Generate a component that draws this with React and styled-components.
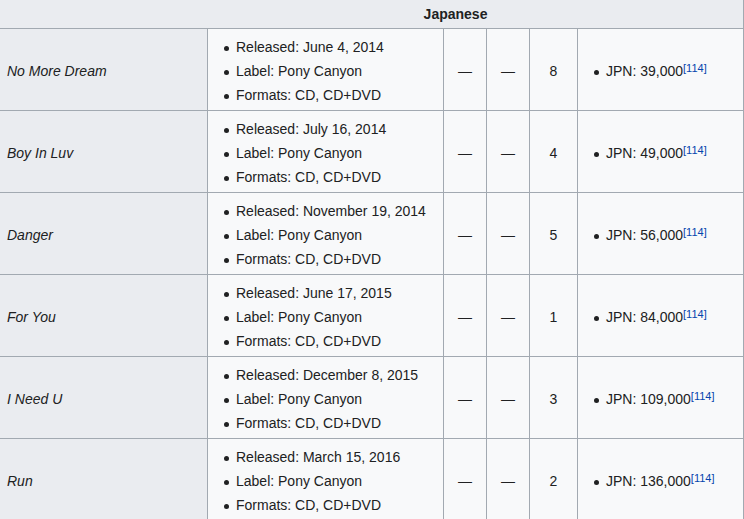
import styled, { createGlobalStyle } from "styled-components";

const releases = [
  { title: "No More Dream", date: "June 4, 2014", peak: "8", sales: "39,000" },
  { title: "Boy In Luv", date: "July 16, 2014", peak: "4", sales: "49,000" },
  { title: "Danger", date: "November 19, 2014", peak: "5", sales: "56,000" },
  { title: "For You", date: "June 17, 2015", peak: "1", sales: "84,000" },
  { title: "I Need U", date: "December 8, 2015", peak: "3", sales: "109,000" },
  { title: "Run", date: "March 15, 2016", peak: "2", sales: "136,000" },
];

export default function App() {
  return (
    <>
      <GlobalStyle />
      <Viewport>
        <Table>
          <colgroup>
            <col style={{ width: 208 }} />
            <col style={{ width: 236 }} />
            <col style={{ width: 43 }} />
            <col style={{ width: 43 }} />
            <col style={{ width: 48 }} />
            <col style={{ width: 166 }} />
          </colgroup>
          <thead>
            <tr>
              <HeaderCell colSpan={6}>Japanese</HeaderCell>
            </tr>
          </thead>
          <tbody>
            {releases.map((r) => (
              <tr key={r.title}>
                <TitleCell>{r.title}</TitleCell>
                <Cell>
                  <List>
                    <Item>Released: {r.date}</Item>
                    <Item>Label: Pony Canyon</Item>
                    <Item>Formats: CD, CD+DVD</Item>
                  </List>
                </Cell>
                <Cell $center>—</Cell>
                <Cell $center>—</Cell>
                <Cell $center>{r.peak}</Cell>
                <Cell>
                  <List>
                    <Item>
                      JPN: {r.sales}
                      <Ref>[114]</Ref>
                    </Item>
                  </List>
                </Cell>
              </tr>
            ))}
          </tbody>
        </Table>
      </Viewport>
    </>
  );
}

const GlobalStyle = createGlobalStyle`
  body {
    margin: 0;
    background: #ffffff;
    font-family: "Liberation Sans", Arial, sans-serif;
    font-size: 14px;
    color: #202122;
  }
`;

const Viewport = styled.div`
  width: 744px;
  height: 519px;
  overflow: hidden;
`;

const Table = styled.table`
  border-collapse: collapse;
  table-layout: fixed;
  width: 745px;
  margin: -1px 0 0 -1px;
  background: #f8f9fa;
  color: #202122;

  td,
  th {
    border: 1px solid #a2a9b1;
  }
`;

const HeaderCell = styled.th`
  background: #eaecf0;
  height: 29px;
  padding: 0 0 0 168px;
  box-sizing: border-box;
  font-weight: bold;
  text-align: center;
  vertical-align: middle;
`;

const Cell = styled.td`
  height: 82px;
  box-sizing: border-box;
  padding: 2px 5.6px 0;
  vertical-align: middle;
  text-align: ${({ $center }) => ($center ? "center" : "left")};
`;

const TitleCell = styled(Cell)`
  background: #eaecf0;
  font-style: italic;
  padding-left: 7px;
`;

const List = styled.ul`
  margin: 0 0 0 22.4px;
  padding: 0;
  list-style: none;
`;

const Item = styled.li`
  position: relative;
  line-height: 24px;

  &::before {
    content: "";
    position: absolute;
    left: -12px;
    top: 11px;
    width: 5px;
    height: 5px;
    border-radius: 50%;
    background: #202122;
  }
`;

const Ref = styled.sup`
  color: #0645ad;
  font-size: 11px;
  line-height: 1;
  vertical-align: 4px;
`;
